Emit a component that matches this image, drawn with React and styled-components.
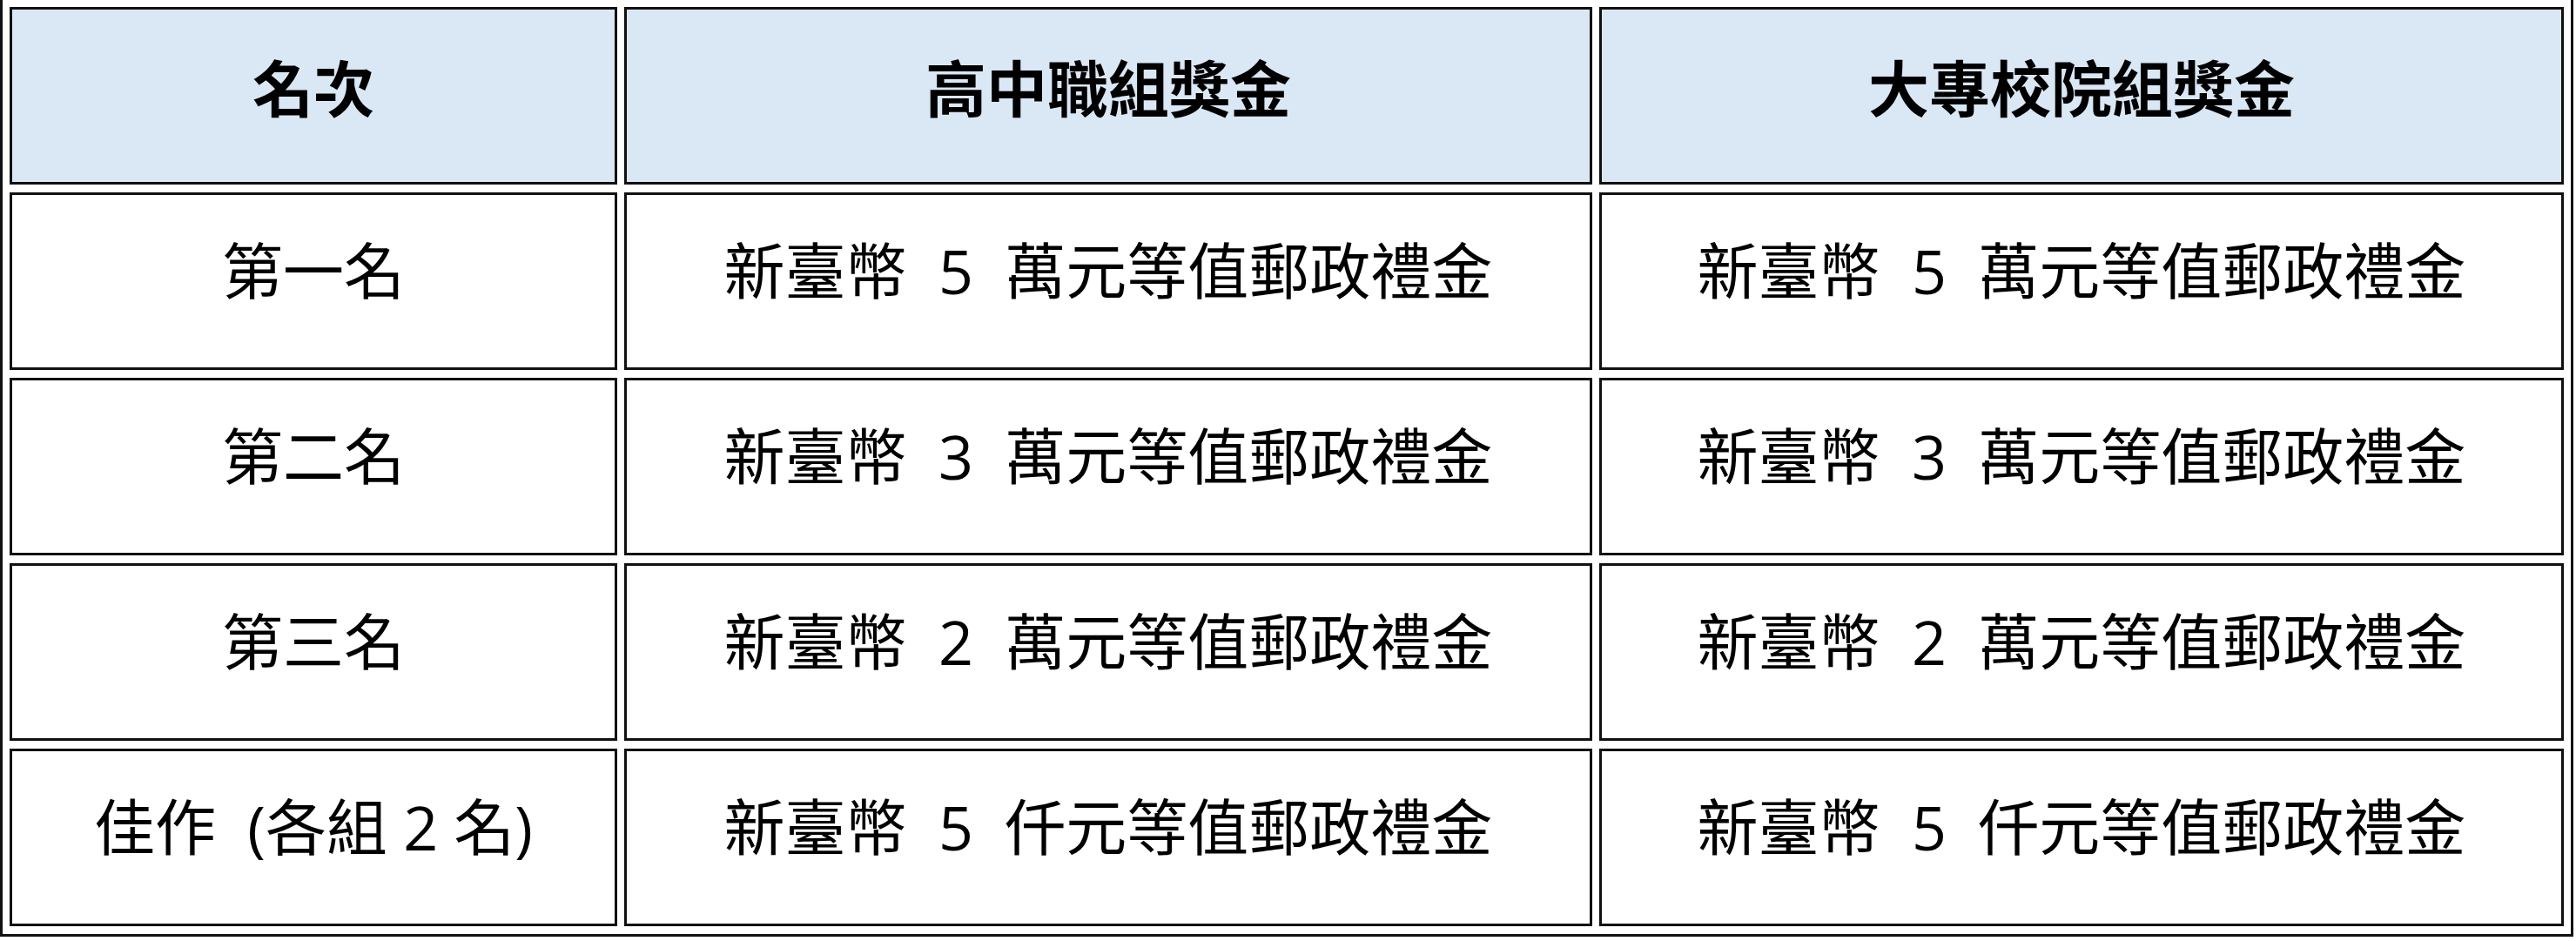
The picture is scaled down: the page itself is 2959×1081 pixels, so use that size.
import React from 'react';
import styled, { createGlobalStyle } from 'styled-components';

const GlobalStyle = createGlobalStyle`
  body {
    margin: 0;
    background: #fff;
    font-family: "Open Sans", "Noto Sans CJK TC", sans-serif;
  }
`;

const Table = styled.table`
  border-collapse: separate;
  border-spacing: 8px 9px;
  border: 3px solid #111;
  margin-top: -4px;
  table-layout: fixed;
`;

const HeadCell = styled.th`
  box-sizing: border-box;
  width: ${(p) => p.$w}px;
  height: 204px;
  padding: 0 0 16px;
  border: 3px solid #111;
  background: #dae7f5;
  color: #000;
  font-size: 70px;
  font-weight: 700;
  line-height: 1;
  text-align: center;
  vertical-align: middle;
`;

const Cell = styled.td`
  box-sizing: border-box;
  height: 204px;
  padding: 0 0 24px;
  border: 3px solid #111;
  background: #fff;
  color: #000;
  font-size: 70px;
  font-weight: 400;
  line-height: 1;
  text-align: center;
  vertical-align: middle;
  white-space: pre;
`;

const columns = [
  { title: '名次', width: 698 },
  { title: '高中職組獎金', width: 1112 },
  { title: '大專校院組獎金', width: 1108 },
];

const rows = [
  ['第一名', '新臺幣  5  萬元等值郵政禮金', '新臺幣  5  萬元等值郵政禮金'],
  ['第二名', '新臺幣  3  萬元等值郵政禮金', '新臺幣  3  萬元等值郵政禮金'],
  ['第三名', '新臺幣  2  萬元等值郵政禮金', '新臺幣  2  萬元等值郵政禮金'],
  ['佳作  (各組 2 名)', '新臺幣  5  仟元等值郵政禮金', '新臺幣  5  仟元等值郵政禮金'],
];

const App = () => {
  return (
    <>
      <GlobalStyle />
      <Table>
        <thead>
          <tr>
            {columns.map((c) => (
              <HeadCell key={c.title} $w={c.width}>
                {c.title}
              </HeadCell>
            ))}
          </tr>
        </thead>
        <tbody>
          {rows.map((r) => (
            <tr key={r[0]}>
              {r.map((text, i) => (
                <Cell key={i}>{text}</Cell>
              ))}
            </tr>
          ))}
        </tbody>
      </Table>
    </>
  );
};

export default App;
